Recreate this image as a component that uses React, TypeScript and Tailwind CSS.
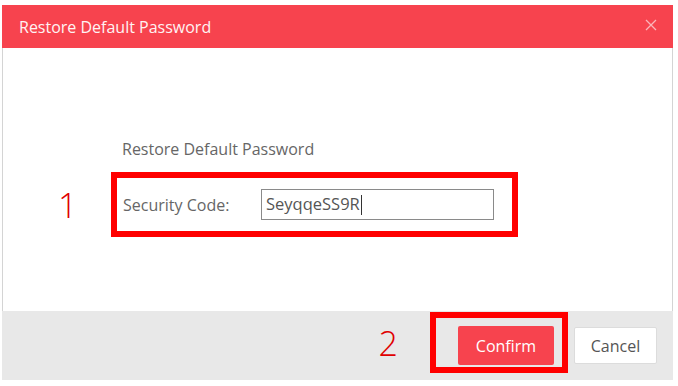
import React from "react";

export default function App() {
  return (
    <div
      className="w-[678px] h-[386px] bg-white pt-[5px] pl-[2px] overflow-hidden"
      style={{ fontFamily: '"Open Sans", "Noto Sans", sans-serif' }}
    >
      <div className="w-[671px] flex flex-col">
        {/* header */}
        <div className="h-[43px] bg-[#f7434e] flex items-center justify-between pl-[17px] pr-[16px]">
          <span className="text-[16px] text-[#fff3f3]">Restore Default Password</span>
          <svg width="12" height="12" viewBox="0 0 12 12" className="mt-[-4px]">
            <path d="M1 1L11 11M11 1L1 11" stroke="#fbb6ba" strokeWidth="1.3" fill="none" />
          </svg>
        </div>

        {/* body */}
        <div className="h-[263px] bg-white border-x border-[#d4d4d4] flex flex-col">
          <div className="pl-[119px] pt-[89px] text-[16px] text-[#666] leading-[24px]">Restore Default Password</div>
          <div className="flex items-center mt-[11px] pl-[55px]">
            <span className="w-[53px] text-[34px] font-light text-[#e00000] leading-none">1</span>
            <div className="w-[407px] h-[65px] border-[6px] border-[#ff0000] flex items-center pl-[6px]">
              <span className="text-[16px] text-[#666] w-[138px]">Security Code:</span>
              <div className="w-[233px] h-[31px] border border-[#8a8a8a] flex items-center pl-[4px] text-[16.5px] text-[#555]">
                SeyqqeSS9R
                <span className="w-px h-[20px] bg-[#333] ml-[1px]" />
              </div>
            </div>
          </div>
        </div>

        {/* footer */}
        <div className="h-[69px] bg-[#e8e8e8] flex items-start justify-end pt-[1px] pr-[16px]">
          <span className="text-[34px] font-light text-[#e00000] leading-none mt-[14px] mr-[32px]">2</span>
          <div className="w-[138px] h-[61px] border-[6px] border-[#ff0000] pl-[22px] pt-[8px]">
            <button className="w-[96px] h-[39px] rounded-[2px] bg-[#f7434e] text-white text-[16px]">Confirm</button>
          </div>
          <button className="ml-[6px] mt-[15px] w-[83px] h-[37px] bg-white border border-[#dcdcdc] rounded-[2px] text-[16px] text-[#555]">
            Cancel
          </button>
        </div>
      </div>
    </div>
  );
}
